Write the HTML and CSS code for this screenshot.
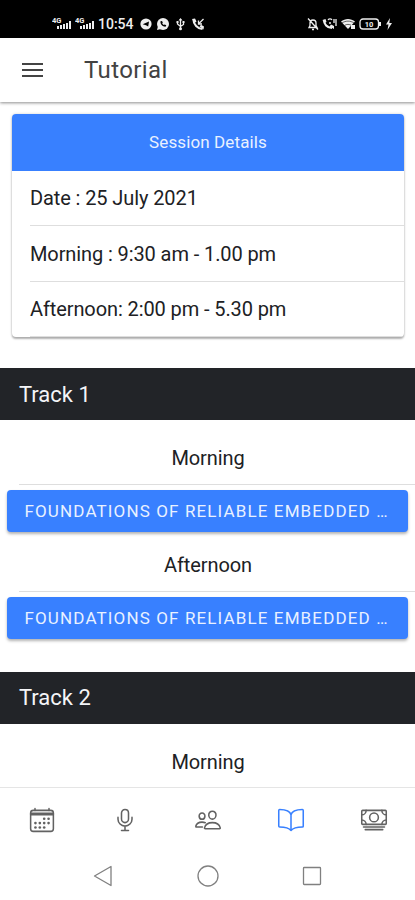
FILE: index.html
```html
<!DOCTYPE html>
<html lang="en">
<head>
<meta charset="utf-8">
<title>Tutorial</title>
<link rel="stylesheet" href="styles.css">
</head>
<body>
<div class="screen">
  <div class="status">
    <svg class="signal" viewBox="0 0 19 15"><text x="0" y="6.5">4G</text><path d="M5 10h2v3H5zM8 9h2v4H8zM11 8h2v5h-2zM14 7h2v6h-2zM17 5h2v8h-2z"/></svg>
    <svg class="signal second" viewBox="0 0 19 15"><text x="0" y="6.5">4G</text><path d="M5 10h2v3H5zM8 9h2v4H8zM11 8h2v5h-2zM14 7h2v6h-2zM17 5h2v8h-2z"/></svg>
    <span class="clock">10:54</span>
    <svg class="notices" viewBox="0 0 66 14">
      <circle cx="6" cy="7" r="5.6"/><path class="hole" d="M2.7 7.2 9 4.5 8.2 9.4 6 8.2z"/>
      <circle cx="23" cy="7" r="6"/><path d="M17 13l1-4 3 3z"/><path class="cut" d="M20.5 4.3c-.5 3 2.2 5.5 5 5.4l.8-1.4-1.6-.9-1 .6-1.5-1.6.6-1-.8-1.4z"/>
      <path class="line" d="M40.5 2v10M37.5 5v2l3 2.5 3-2V5"/><path d="M38.5 3.6 40.5 1l2 2.6zM36.5 4h2v2h-2zM42.5 4h2v2h-2z"/><circle cx="40.5" cy="11.7" r="1.5"/>
      <path class="thick" d="M53.5 2.5c0 5 4 9 9 9.5"/><path d="M52 2l3-.5 1.5 3-2 1.5zM59.5 9.5l1.5-1.7 3 1.7-.5 3z"/><path class="line" d="M63.5 2l-4.8 4.8M58.5 3.5V7H62"/>
    </svg>
    <svg class="indicators" viewBox="0 0 86 14">
      <path class="line" d="M2 10.5h8L9 8.5V6c0-4-6-4-6 0v2.5zM5 12.5h2M1 1.5l10 11"/>
      <path class="thick" d="M17 3c0 4 3 8 8 8"/><path d="M15.5 3l3-1 1 3-2 1zM22.5 9.5l1.5-2 3 1.5v3z"/><path class="line" d="M21 3c1-1.5 3-1.5 4 0M22 6h2M27 2v4M29 2v7"/>
      <path d="M34 4.5c4-3.5 10-3.5 14 0L41 12z"/><path class="cutline" d="M35 6c3.5-2.5 8.500-2.500 12 0M37.500 8.500c2-1.500 5-1.500 7 0"/><path d="M44 8h4v4h-4z"/>
      <rect class="line" x="53" y="2" width="18.500" height="10" rx="3"/><path d="M72 5h2v4h-2z"/><text x="62" y="9.500" text-anchor="middle">10</text>
      <path d="M83 1l-4 6.500h2.500L80.500 13l4.500-7h-2.700z"/>
    </svg>
  </div>
  <header class="toolbar">
    <div class="menu"><i></i><i></i><i></i></div>
    <h1>Tutorial</h1>
  </header>
  <main class="content">
    <section class="card">
      <div class="card-title"><span>Session Details</span></div>
      <div class="detail"><span>Date : 25 July 2021</span></div>
      <div class="detail"><span>Morning : 9:30 am - 1.00 pm</span></div>
      <div class="detail"><span>Afternoon: 2:00 pm - 5.30 pm</span></div>
    </section>
    <h2 class="track">Track 1</h2>
    <div class="slot first"><span>Morning</span></div>
    <button class="session">FOUNDATIONS OF RELIABLE EMBEDDED …</button>
    <div class="slot"><span>Afternoon</span></div>
    <button class="session">FOUNDATIONS OF RELIABLE EMBEDDED …</button>
    <h2 class="track next">Track 2</h2>
    <div class="slot first last"><span>Morning</span></div>
  </main>
  <nav class="tabs">
    <svg viewBox="0 0 512 512"><rect x="48" y="80" width="416" height="384" rx="48"/><path d="M128 48v32M384 48v32M464 160H48M48 132h416"/><g class="dots"><circle cx="296" cy="232" r="24"/><circle cx="376" cy="232" r="24"/><circle cx="296" cy="312" r="24"/><circle cx="376" cy="312" r="24"/><circle cx="136" cy="312" r="24"/><circle cx="216" cy="312" r="24"/><circle cx="136" cy="392" r="24"/><circle cx="216" cy="392" r="24"/><circle cx="296" cy="392" r="24"/></g></svg>
    <svg viewBox="0 0 512 512"><path d="M192 448h128M384 208v32c0 70.400-57.600 128-128 128s-128-57.600-128-128v-32M256 368v80M256 64a63.700 63.700 0 0 0-64 64v111c0 35.200 29 65 64 65s64-29 64-65V128c0-36-28-64-64-64z"/></svg>
    <svg viewBox="0 0 512 512"><path d="M402 168c-3 40-33 72-66 72s-63-32-66-72c-3-42 26-72 66-72s69 31 66 72zM336 304c-65 0-128 32-144 95-2 8 3 17 12 17h264c9 0 14-9 12-17-16-64-79-95-144-95zM200 186c-2 32-27 58-53 58s-51-26-53-58c-2-33 21-58 53-58s55 25 53 58zM206 306c-18-8-38-11-59-11-52 0-102 25-115 76-2 7 3 13 10 13h112"/></svg>
    <svg class="active" viewBox="0 0 512 512"><path d="M256 160c16-63 76-95 208-96a16 16 0 0 1 16 16v288a16 16 0 0 1-16 16c-128 0-177 26-208 64-30-38-80-64-208-64-10 0-16-8-16-18V80a16 16 0 0 1 16-16c132 1 192 33 208 96zM256 160v288"/></svg>
    <svg viewBox="0 0 512 512"><rect x="32" y="80" width="448" height="256" rx="16"/><path d="M64 384h384M96 432h320M480 160a80 80 0 0 1-80-80M32 160a80 80 0 0 0 80-80M480 256a80 80 0 0 0-80 80M32 256a80 80 0 0 1 80 80"/><circle cx="256" cy="208" r="80"/></svg>
  </nav>
  <div class="system">
    <svg viewBox="0 0 24 24"><path d="M19 2.500v19L2.500 12z"/></svg>
    <svg viewBox="0 0 24 24"><circle cx="12" cy="12" r="10"/></svg>
    <svg viewBox="0 0 24 24"><rect x="3.500" y="3.500" width="17" height="17" rx=".7"/></svg>
  </div>
</div>
</body>
</html>
```
FILE: styles.css
```css
* { box-sizing: border-box; }
body { margin: 0; font-family: Roboto, sans-serif; color: #202124; background: #fff; }
.screen { width: 415px; height: 900px; display: flex; flex-direction: column; overflow: hidden; }
.status { height: 37.500px; flex: none; background: #000; color: #eee; display: flex; align-items: center; padding: 10px 22px 0 52px; }
.status svg { fill: #eee; flex: none; }
.status text { font: bold 7.500px Roboto, sans-serif; }
.signal { width: 19px; height: 15px; }
.second { margin-left: 4px; }
.clock { font-size: 14px; font-weight: 500; margin-left: 4px; width: 35px; white-space: nowrap; }
.notices { width: 66px; height: 14px; margin-left: 7px; }
.indicators { width: 86px; height: 14px; margin-left: auto; }
.status .line, .status .thick { fill: none; stroke: #eee; stroke-width: 1.300; }
.status .thick { stroke-width: 2.200; }
.status .hole { fill: #000; }
.status .cut { fill: #000; }
.status .cutline { fill: none; stroke: #000; stroke-width: .6; }
.toolbar { height: 64.500px; flex: none; display: flex; align-items: center; padding-left: 22px; box-shadow: 0 1px 3px rgba(0,0,0,.45); position: relative; }
.menu { width: 21px; display: flex; flex-direction: column; gap: 4px; }
.menu i { height: 2px; background: #444; }
h1 { margin: 0 0 0 41px; font-size: 24px; line-height: 30px; font-weight: 400; color: #424242; letter-spacing: .4px; }
.content { height: 685px; flex: none; overflow: hidden; }
.card { margin: 11.500px 11px 0 12px; height: 223px; border-radius: 4px; overflow: hidden; box-shadow: 0 2px 2px rgba(0,0,0,.28), 0 0 3px rgba(0,0,0,.18); }
.card-title { height: 57px; background: #3880ff; color: #e9f1ff; display: flex; align-items: center; justify-content: center; font-size: 17px; letter-spacing: .12px; }
.detail { height: 55.500px; margin-left: 18px; padding-top: 1px; border-bottom: 1px solid #dedede; display: flex; align-items: center; font-size: 20px; letter-spacing: -.1px; white-space: nowrap; }
.track { margin: 31.500px 0 0; height: 52px; background: #222428; color: #f4f5f8; font-size: 22px; font-weight: 400; display: flex; align-items: center; padding-left: 19px; }
.slot { height: 52.500px; margin-left: 19px; padding: 0 18px 0 0; border-bottom: 1px solid #dedede; display: flex; align-items: center; justify-content: center; font-size: 20px; letter-spacing: -.1px; }
.slot.first { height: 65px; padding-top: 12px; }
.slot.last { border: 0; }
.session { display: block; width: 401px; height: 42px; margin: 5px 0 7px 7px; padding: 0 0 0 17.500px; border: 0; border-radius: 4px; background: #3880ff; color: #e9f1ff; font: 400 17px Roboto, sans-serif; letter-spacing: 1.130px; white-space: nowrap; text-align: left; box-shadow: 0 2px 3px rgba(0,0,0,.3); }
.next { margin-top: 33px; }
.tabs { height: 65px; flex: none; border-top: 1px solid #e5e5e5; display: grid; grid-template-columns: repeat(5, 1fr); align-items: center; justify-items: center; }
.tabs svg { width: 28px; height: 28px; fill: none; stroke: #626262; stroke-width: 28; stroke-linecap: round; stroke-linejoin: round; }
.tabs .active { stroke: #3880ff; }
.tabs .dots { fill: #626262; stroke: none; }
.system { height: 48px; flex: none; display: flex; justify-content: center; align-items: center; gap: 80px; }
.system svg { width: 24px; height: 24px; fill: none; stroke: #808080; stroke-width: 1.300; stroke-linejoin: round; }
```
